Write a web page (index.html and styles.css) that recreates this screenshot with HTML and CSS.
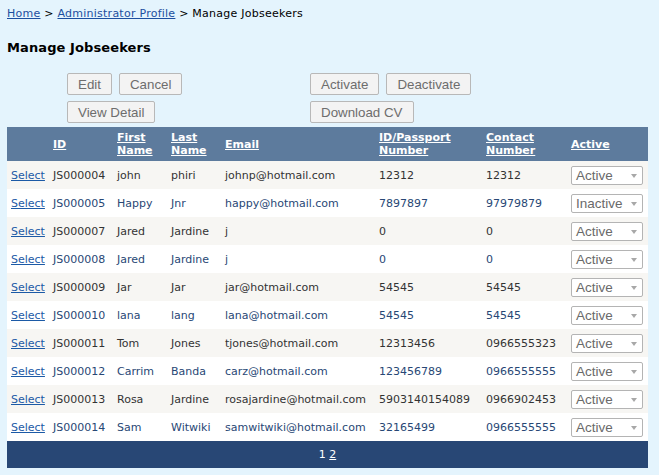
FILE: index.html
```html
<!DOCTYPE html>
<html>
<head>
<meta charset="utf-8">
<link rel="stylesheet" href="styles.css">
</head>
<body>
<div class="page">
  <div class="crumb"><a href="#">Home</a> &gt; <a href="#">Administrator Profile</a> &gt; Manage Jobseekers</div>
  <h1 class="title">Manage Jobseekers</h1>
  <div class="actions">
    <div class="group">
      <div class="btnrow"><button class="btn">Edit</button><button class="btn">Cancel</button></div>
      <div class="btnrow"><button class="btn">View Detail</button></div>
    </div>
    <div class="group">
      <div class="btnrow"><button class="btn">Activate</button><button class="btn">Deactivate</button></div>
      <div class="btnrow"><button class="btn">Download CV</button></div>
    </div>
  </div>
  <table class="grid">
    <colgroup>
      <col class="c1"><col class="c2"><col class="c3"><col class="c4"><col class="c5"><col class="c6"><col class="c7"><col class="c8">
    </colgroup>
    <thead>
      <tr>
        <th></th>
        <th><a href="#">ID</a></th>
        <th><a href="#">First Name</a></th>
        <th><a href="#">Last Name</a></th>
        <th><a href="#">Email</a></th>
        <th><a href="#">ID/Passport Number</a></th>
        <th><a href="#">Contact Number</a></th>
        <th><a href="#">Active</a></th>
      </tr>
    </thead>
    <tbody>
      <tr class="odd"><td><a href="#">Select</a></td><td>JS000004</td><td>john</td><td>phiri</td><td>johnp@hotmail.com</td><td>12312</td><td>12312</td><td><span class="dd">Active</span></td></tr>
      <tr class="alt"><td><a href="#">Select</a></td><td>JS000005</td><td>Happy</td><td>Jnr</td><td>happy@hotmail.com</td><td>7897897</td><td>97979879</td><td><span class="dd">Inactive</span></td></tr>
      <tr class="odd"><td><a href="#">Select</a></td><td>JS000007</td><td>Jared</td><td>Jardine</td><td>j</td><td>0</td><td>0</td><td><span class="dd">Active</span></td></tr>
      <tr class="alt"><td><a href="#">Select</a></td><td>JS000008</td><td>Jared</td><td>Jardine</td><td>j</td><td>0</td><td>0</td><td><span class="dd">Active</span></td></tr>
      <tr class="odd"><td><a href="#">Select</a></td><td>JS000009</td><td>Jar</td><td>Jar</td><td>jar@hotmail.com</td><td>54545</td><td>54545</td><td><span class="dd">Active</span></td></tr>
      <tr class="alt"><td><a href="#">Select</a></td><td>JS000010</td><td>lana</td><td>lang</td><td>lana@hotmail.com</td><td>54545</td><td>54545</td><td><span class="dd">Active</span></td></tr>
      <tr class="odd"><td><a href="#">Select</a></td><td>JS000011</td><td>Tom</td><td>Jones</td><td>tjones@hotmail.com</td><td>12313456</td><td>0966555323</td><td><span class="dd">Active</span></td></tr>
      <tr class="alt"><td><a href="#">Select</a></td><td>JS000012</td><td>Carrim</td><td>Banda</td><td>carz@hotmail.com</td><td>123456789</td><td>0966555555</td><td><span class="dd">Active</span></td></tr>
      <tr class="odd"><td><a href="#">Select</a></td><td>JS000013</td><td>Rosa</td><td>Jardine</td><td>rosajardine@hotmail.com</td><td>5903140154089</td><td>0966902453</td><td><span class="dd">Active</span></td></tr>
      <tr class="alt"><td><a href="#">Select</a></td><td>JS000014</td><td>Sam</td><td>Witwiki</td><td>samwitwiki@hotmail.com</td><td>32165499</td><td>0966555555</td><td><span class="dd">Active</span></td></tr>
    </tbody>
    <tfoot>
      <tr class="pager"><td colspan="8"><span>1</span> <a href="#">2</a></td></tr>
    </tfoot>
  </table>
</div>
</body>
</html>
```
FILE: styles.css
```css
html, body {
  margin: 0;
  padding: 0;
  background: #e4f4fd;
}
body {
  font-family: "DejaVu Sans", Verdana, sans-serif;
  font-size: 11px;
  color: #000;
}
.page {
  padding: 7px 0 0 7px;
}
.crumb {
  line-height: 14px;
  height: 14px;
  letter-spacing: 0.25px;
}
.crumb a {
  color: #1c4fa0;
}
.title {
  margin: 19px 0 0 0;
  font-size: 13px;
  line-height: 16px;
  font-weight: bold;
  letter-spacing: 0.1px;
}
.actions {
  margin: 17px 0 0 60px;
  display: grid;
  grid-template-columns: 243px auto;
}
.group {
  display: flex;
  flex-direction: column;
  gap: 6px;
}
.btnrow {
  display: flex;
  gap: 7px;
}
.btn {
  height: 22px;
  padding: 0 10px;
  font-family: "Liberation Sans", Arial, sans-serif;
  font-size: 13.33px;
  color: #6d6d6d;
  background: #f3f3f3;
  border: 1px solid #b8b8b8;
  border-radius: 2px;
  margin: 0;
}
.grid {
  margin-top: 4px;
  width: 641px;
  table-layout: fixed;
  border-collapse: collapse;
  border-spacing: 0;
}
.c1 { width: 42px; }
.c2 { width: 64px; }
.c3 { width: 54px; }
.c4 { width: 54px; }
.c5 { width: 154px; }
.c6 { width: 107px; }
.c7 { width: 85px; }
.c8 { width: 81px; }
.grid th {
  background: #5d7b9d;
  color: #fff;
  font-weight: bold;
  text-align: left;
  vertical-align: middle;
  height: 34px;
  padding: 0 4px;
  line-height: 13px;
  box-sizing: border-box;
}
.grid th a {
  color: #fff;
}
.grid td {
  height: 28px;
  padding: 0 4px;
  vertical-align: middle;
  white-space: nowrap;
  box-sizing: border-box;
}
.grid td a {
  color: #1c5aa6;
}
.odd {
  background: #f7f6f3;
  color: #333333;
}
.alt {
  background: #fff;
  color: #284775;
}
.dd {
  position: relative;
  display: block;
  width: 72px;
  height: 19px;
  box-sizing: border-box;
  border: 1px solid #b4b4b4;
  border-radius: 2px;
  background: #fff;
  font-family: "Liberation Sans", Arial, sans-serif;
  font-size: 13.5px;
  line-height: 17px;
  color: #6a6a6a;
  padding-left: 4px;
}
.dd::after {
  content: "";
  position: absolute;
  right: 5px;
  top: 7px;
  border-left: 3.5px solid transparent;
  border-right: 3.5px solid transparent;
  border-top: 4px solid #a8a8a8;
}
.pager td {
  background: #284775;
  color: #fff;
  text-align: center;
  height: 27px;
}
.pager td a {
  color: #fff;
}
```
